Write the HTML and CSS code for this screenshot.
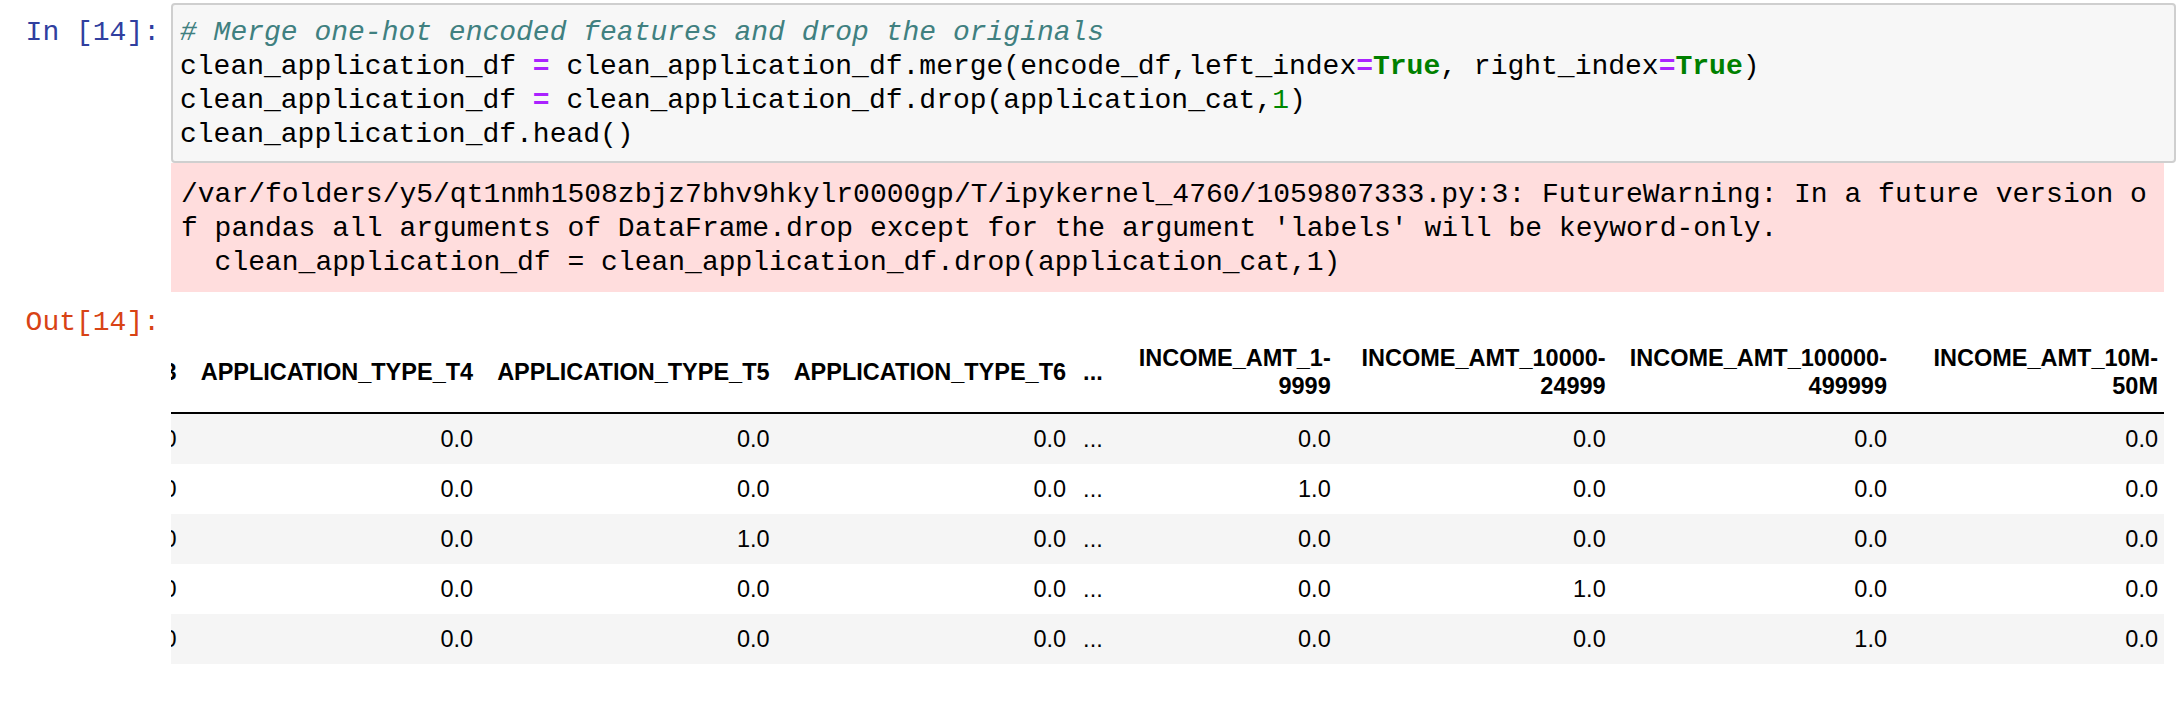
FILE: index.html
```html
<!DOCTYPE html>
<html>
<head>
<meta charset="utf-8">
<link rel="stylesheet" href="styles.css">
</head>
<body>
<div class="cell">
  <div class="row">
    <div class="prompt in-prompt">In&nbsp;[14]:</div>
    <div class="input-area"><span class="c-comment"># Merge one-hot encoded features and drop the originals</span>
clean_application_df <span class="c-op">=</span> clean_application_df.merge(encode_df,left_index<span class="c-op">=</span><span class="c-kw">True</span>, right_index<span class="c-op">=</span><span class="c-kw">True</span>)
clean_application_df <span class="c-op">=</span> clean_application_df.drop(application_cat,<span class="c-num">1</span>)
clean_application_df.head()</div>
  </div>
  <div class="row">
    <div class="prompt"></div>
    <div class="stderr">/var/folders/y5/qt1nmh1508zbjz7bhv9hkylr0000gp/T/ipykernel_4760/1059807333.py:3: FutureWarning: In a future version o
f pandas all arguments of DataFrame.drop except for the argument 'labels' will be keyword-only.
  clean_application_df = clean_application_df.drop(application_cat,1)</div>
  </div>
  <div class="row">
    <div class="prompt out-prompt">Out[14]:</div>
    <div class="out-area">
      <table class="dataframe">
        <thead>
          <tr>
            <th>APPLICATION_TYPE_T3</th>
            <th>APPLICATION_TYPE_T4</th>
            <th>APPLICATION_TYPE_T5</th>
            <th>APPLICATION_TYPE_T6</th>
            <th class="col-ell">...</th>
            <th class="col-inc1">INCOME_AMT_1-<br>9999</th>
            <th class="col-inc2">INCOME_AMT_10000-<br>24999</th>
            <th class="col-inc3">INCOME_AMT_100000-<br>499999</th>
            <th class="col-inc4">INCOME_AMT_10M-<br>50M</th>
          </tr>
        </thead>
        <tbody>
          <tr><td>0.0</td><td>0.0</td><td>0.0</td><td>0.0</td><td>...</td><td>0.0</td><td>0.0</td><td>0.0</td><td>0.0</td></tr>
          <tr><td>0.0</td><td>0.0</td><td>0.0</td><td>0.0</td><td>...</td><td>1.0</td><td>0.0</td><td>0.0</td><td>0.0</td></tr>
          <tr><td>0.0</td><td>0.0</td><td>1.0</td><td>0.0</td><td>...</td><td>0.0</td><td>0.0</td><td>0.0</td><td>0.0</td></tr>
          <tr><td>0.0</td><td>0.0</td><td>0.0</td><td>0.0</td><td>...</td><td>0.0</td><td>1.0</td><td>0.0</td><td>0.0</td></tr>
          <tr><td>0.0</td><td>0.0</td><td>0.0</td><td>0.0</td><td>...</td><td>0.0</td><td>0.0</td><td>1.0</td><td>0.0</td></tr>
        </tbody>
      </table>
    </div>
  </div>
</div>
</body>
</html>
```

FILE: styles.css
```css
html, body {
  margin: 0;
  padding: 0;
  background: #ffffff;
}

.cell {
  padding-top: 3px;
}

.row {
  display: flex;
  align-items: flex-start;
}

.prompt {
  flex: 0 0 171px;
  box-sizing: border-box;
  padding-right: 11px;
  text-align: right;
  font-family: "Liberation Mono", monospace;
  font-size: 28px;
  line-height: 34px;
  white-space: nowrap;
}

.in-prompt {
  color: #303f9f;
  padding-top: 13px;
}

.out-prompt {
  color: #d84315;
  padding-top: 14px;
}

.input-area {
  flex: 1 1 auto;
  min-width: 0;
  margin-right: 3px;
  border: 2px solid #cfcfcf;
  border-radius: 4px;
  background: #f7f7f7;
  padding: 11px 7px 9px;
  font-family: "Liberation Mono", monospace;
  font-size: 28px;
  line-height: 34px;
  color: #000000;
  white-space: pre;
  overflow: hidden;
}

.c-comment {
  color: #408080;
  font-style: italic;
}

.c-op {
  color: #aa22ff;
  font-weight: bold;
}

.c-kw {
  color: #008000;
  font-weight: bold;
}

.c-num {
  color: #008800;
}

.stderr {
  flex: 1 1 auto;
  min-width: 0;
  margin-right: 15px;
  background: #ffdddd;
  padding: 15px 10px 12px;
  font-family: "Liberation Mono", monospace;
  font-size: 28px;
  line-height: 34px;
  color: #000000;
  white-space: pre;
  overflow: hidden;
}

.out-area {
  flex: 1 1 auto;
  min-width: 0;
  margin-right: 15px;
  padding-top: 42px;
  display: flex;
  justify-content: flex-end;
  overflow: hidden;
}

.dataframe {
  flex: 0 0 auto;
  border-collapse: collapse;
  border-spacing: 0;
  font-family: "Liberation Sans", Arial, sans-serif;
  font-size: 23.5px;
  line-height: 28px;
  color: #000000;
  white-space: nowrap;
}

.dataframe th,
.dataframe td {
  padding: 11px 12px;
  text-align: right;
  vertical-align: middle;
}

.dataframe th {
  font-weight: bold;
  padding-top: 10px;
  padding-bottom: 12px;
}

.dataframe tr > :nth-child(5) {
  padding-left: 5px;
}

.dataframe tr > :last-child {
  padding-right: 6px;
}

.col-inc1 {
  width: 204px;
}

.col-inc2 {
  width: 251px;
}

.col-inc3 {
  width: 255px;
}

.col-inc4 {
  width: 247px;
}

.dataframe thead {
  border-bottom: 2px solid #000000;
}

.dataframe tbody tr:nth-child(odd) {
  background: #f5f5f5;
}
```
